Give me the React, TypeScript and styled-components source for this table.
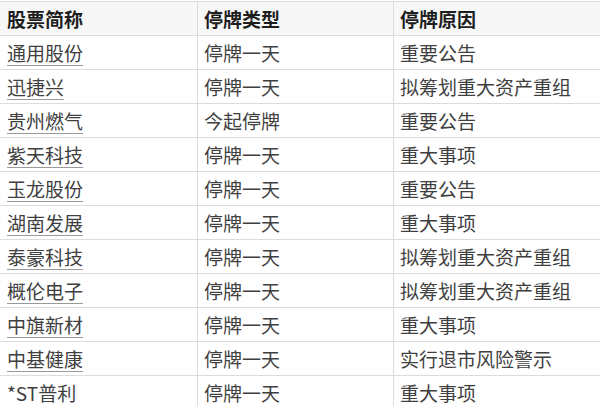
import React from "react";
import styled, { createGlobalStyle } from "styled-components";

const Global = createGlobalStyle`
  html, body {
    margin: 0;
    padding: 0;
    background: #ffffff;
    overflow: hidden;
  }
  body {
    font-family: "Noto Sans CJK SC", "Noto Sans", sans-serif;
  }
`;

const Table = styled.div`
  margin-top: 1px;
  width: 100%;
  border-top: 1px solid #dcdcdc;
`;

const Row = styled.div<{ $head?: boolean }>`
  display: grid;
  grid-template-columns: 197px 196px 1fr;
  height: 34px;
  box-sizing: border-box;
  border-bottom: 1px solid #dcdcdc;
  background: ${(p) => (p.$head ? "#f7f7f7" : "#ffffff")};
  color: ${(p) => (p.$head ? "#1e1e1e" : "#3f3f3f")};
  font-weight: ${(p) => (p.$head ? 700 : 400)};
`;

const Cell = styled.div`
  display: flex;
  align-items: center;
  padding: 0 6px;
  border-left: 1px solid #dcdcdc;
  font-size: 19px;
  line-height: 1;
  white-space: nowrap;
  overflow: hidden;
  &:first-child {
    border-left-color: transparent;
  }
`;

const Link = styled.span`
  color: #3f3f3f;
  text-decoration: underline;
  text-decoration-color: #9a9a9a;
  text-decoration-thickness: 1px;
  text-underline-offset: 4px;
`;

type Item = { name: string; type: string; reason: string; link: boolean };

const rows: Item[] = [
  { name: "通用股份", type: "停牌一天", reason: "重要公告", link: true },
  { name: "迅捷兴", type: "停牌一天", reason: "拟筹划重大资产重组", link: true },
  { name: "贵州燃气", type: "今起停牌", reason: "重要公告", link: true },
  { name: "紫天科技", type: "停牌一天", reason: "重大事项", link: true },
  { name: "玉龙股份", type: "停牌一天", reason: "重要公告", link: true },
  { name: "湖南发展", type: "停牌一天", reason: "重大事项", link: true },
  { name: "泰豪科技", type: "停牌一天", reason: "拟筹划重大资产重组", link: true },
  { name: "概伦电子", type: "停牌一天", reason: "拟筹划重大资产重组", link: true },
  { name: "中旗新材", type: "停牌一天", reason: "重大事项", link: true },
  { name: "中基健康", type: "停牌一天", reason: "实行退市风险警示", link: true },
  { name: "*ST普利", type: "停牌一天", reason: "重大事项", link: false },
];

export default function App() {
  return (
    <>
      <Global />
      <Table>
        <Row $head>
          <Cell>股票简称</Cell>
          <Cell>停牌类型</Cell>
          <Cell>停牌原因</Cell>
        </Row>
        {rows.map((r) => (
          <Row key={r.name}>
            <Cell>{r.link ? <Link>{r.name}</Link> : r.name}</Cell>
            <Cell>{r.type}</Cell>
            <Cell>{r.reason}</Cell>
          </Row>
        ))}
      </Table>
    </>
  );
}
